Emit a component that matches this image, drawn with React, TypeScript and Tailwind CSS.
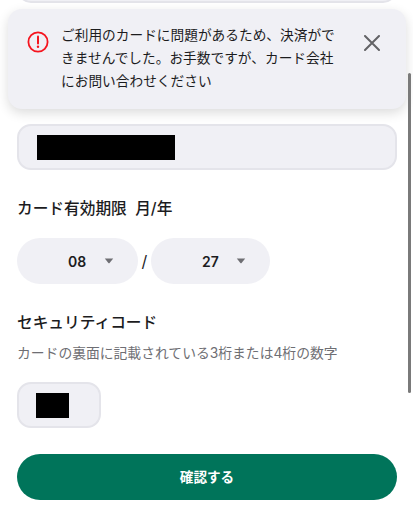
const jp = '"Inter", "Noto Sans CJK JP", sans-serif';

function Chevron() {
  return (
    <svg width="10" height="6" viewBox="0 0 10 6" className="block">
      <path d="M0.8 0.6H9.2L5.6 5Q5 5.6 4.4 5Z" fill="#6e6e73" />
    </svg>
  );
}

export default function App() {
  return (
    <div className="relative h-[507px] w-[413px] overflow-hidden bg-white text-[#1c1c1e]" style={{ fontFamily: jp }}>
      <div className="flex flex-col px-[17px]">
        <div className="mt-[-40px] h-[43px] w-[380px] rounded-[14px] border-2 border-[#e4e4ea] bg-[#f0f0f5]" />
        <div className="mt-[121px] flex h-[46px] w-[380px] items-center rounded-[14px] border-2 border-[#e4e4ea] bg-[#f0f0f5] pl-[18px]">
          <div className="h-[25px] w-[138px] bg-black" />
        </div>
        <div className="mt-[29px] text-[15.7px] font-medium leading-[20px]">カード有効期限&nbsp; 月/年</div>
        <div className="mt-[19px] flex h-[46px] items-center">
          <div className="flex h-[46px] w-[121px] items-center rounded-full bg-[#f0f0f5] pl-[51px]">
            <span className="w-[36px] text-[14px] font-semibold">08</span>
            <Chevron />
          </div>
          <span className="w-[13px] text-center text-[16px]">/</span>
          <div className="flex h-[46px] w-[119px] items-center rounded-full bg-[#f0f0f5] pl-[51px]">
            <span className="w-[34px] text-[14px] font-semibold">27</span>
            <Chevron />
          </div>
        </div>
        <div className="mt-[29px] text-[15.7px] font-medium leading-[20px]">セキュリティコード</div>
        <div className="mt-[10px] text-[13.8px] leading-[20px] text-[#6e6e73]">カードの裏面に記載されている3桁または4桁の数字</div>
        <div className="mt-[19px] flex h-[46px] w-[84px] items-center rounded-[14px] border-2 border-[#e4e4ea] bg-[#f0f0f5] pl-[17px]">
          <div className="h-[25px] w-[33px] bg-black" />
        </div>
        <button className="mt-[26px] h-[46px] w-[380px] rounded-full bg-[#00745a] text-[13.6px] font-bold text-white">確認する</button>
      </div>

      <div className="absolute left-[8px] top-[9px] flex h-[100px] w-[398px] rounded-[14px] bg-[#f0f0f5] shadow-[0_4px_12px_rgba(0,0,0,0.14)]">
        <svg width="22" height="22" viewBox="0 0 22 22" className="ml-[19px] mt-[22px] shrink-0">
          <circle cx="11" cy="11" r="9.6" fill="none" stroke="#f5141e" strokeWidth="1.8" />
          <path d="M11 5.6V12.4" stroke="#f5141e" strokeWidth="2" strokeLinecap="round" />
          <circle cx="11" cy="15.8" r="1.2" fill="#f5141e" />
        </svg>
        <div className="ml-[12px] mt-[15px] w-[276px] text-[13.7px] leading-[23px] text-[#1c1c1e]">
          ご利用のカードに問題があるため、決済ができませんでした。お手数ですが、カード会社にお問い合わせください
        </div>
        <svg width="16" height="16" viewBox="0 0 16 16" className="ml-[27px] mt-[26px] shrink-0">
          <path d="M1 1L15 15M15 1L1 15" stroke="#636366" strokeWidth="2" strokeLinecap="round" />
        </svg>
      </div>

      <div className="absolute left-[408px] top-[73px] h-[320px] w-[3px] rounded-full bg-[#7a7a7a]" />
    </div>
  );
}
